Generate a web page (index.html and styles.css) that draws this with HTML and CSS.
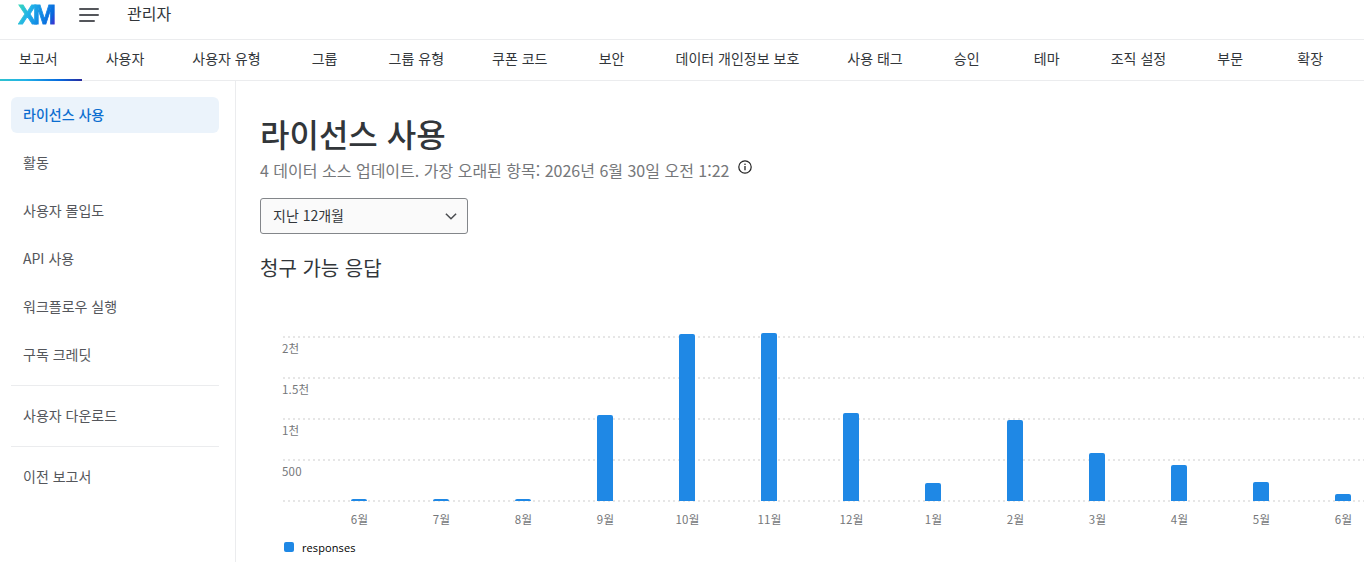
FILE: index.html
```
<!DOCTYPE html>
<html lang="ko">
<head>
  <meta charset="UTF-8">
  <title>라이선스 사용</title>
  <link rel="stylesheet" href="styles.css">
</head>
<body>
  <header class="header">
    <a class="logo">XM</a>
    <svg class="burger" width="20" height="14" viewBox="0 0 20 14" fill="none" stroke="#54565b" stroke-width="2" stroke-linecap="round">
      <path d="M1 1h18M1 7h18M1 13h14"/>
    </svg>
    <span class="header-title">관리자</span>
  </header>

  <nav class="tabs">
    <a class="tab active">보고서</a>
    <a class="tab">사용자</a>
    <a class="tab">사용자 유형</a>
    <a class="tab">그룹</a>
    <a class="tab">그룹 유형</a>
    <a class="tab">쿠폰 코드</a>
    <a class="tab">보안</a>
    <a class="tab">데이터 개인정보 보호</a>
    <a class="tab">사용 태그</a>
    <a class="tab">승인</a>
    <a class="tab">테마</a>
    <a class="tab">조직 설정</a>
    <a class="tab">부문</a>
    <a class="tab">확장</a>
  </nav>

  <div class="layout">
    <aside class="sidebar">
      <a class="side-link active">라이선스 사용</a>
      <a class="side-link">활동</a>
      <a class="side-link">사용자 몰입도</a>
      <a class="side-link">API 사용</a>
      <a class="side-link">워크플로우 실행</a>
      <a class="side-link">구독 크레딧</a>
      <hr>
      <a class="side-link">사용자 다운로드</a>
      <hr>
      <a class="side-link">이전 보고서</a>
    </aside>

    <main class="content">
      <h1>라이선스 사용</h1>
      <div class="updated">
        <span class="updated-text">4 데이터 소스 업데이트. 가장 오래된 항목: 2026년 6월 30일 오전 1:22</span>
        <svg class="info" width="14" height="14" viewBox="0 0 14 14" fill="none" stroke="#222" stroke-width="1.2">
          <circle cx="7" cy="7" r="6.2"/>
          <path d="M7 6v4.2" stroke-width="1.3"/>
          <circle cx="7" cy="4.2" r=".8" fill="#222" stroke="none"/>
        </svg>
      </div>

      <div class="select">
        <span>지난 12개월</span>
        <svg width="12" height="8" viewBox="0 0 12 8" fill="none" stroke="#4a4c50" stroke-width="1.5">
          <path d="M.9 1.7L6 6.8l5.1-5.1"/>
        </svg>
      </div>

      <h2>청구 가능 응답</h2>

      <svg class="chart" width="1104" height="221" viewBox="260 320 1104 221">
        <g class="grid">
          <path d="M283 337H1364M283 378H1364M283 419H1364M283 460H1364M283 501H1364"/>
        </g>
        <g class="y-labels">
          <text x="282" y="353">2천</text>
          <text x="282" y="394">1.5천</text>
          <text x="282" y="435">1천</text>
          <text x="282" y="476">500</text>
        </g>
        <g class="bars" id="bars"></g>
        <g class="x-labels" id="xLabels"></g>
      </svg>

      <div class="legend"><i></i><span>responses</span></div>
    </main>
  </div>

  <script src="chart.js"></script>
</body>
</html>
```
FILE: styles.css
```
* {
  box-sizing: border-box;
}

body {
  margin: 0;
  height: 562px;
  overflow: hidden;
  display: flex;
  flex-direction: column;
  background: #fff;
  color: #32363a;
  font-family: "Noto Sans CJK KR", sans-serif;
  font-size: 14px;
}

/* Header */
.header {
  display: flex;
  align-items: center;
  height: 40px;
  padding: 0 0 10px 18px;
  border-bottom: 1px solid #ebecee;
}

.logo {
  width: 61px;
  font: bold 28px/30px "Liberation Sans", sans-serif;
  letter-spacing: -4px;
  -webkit-text-stroke: .8px transparent;
  background: linear-gradient(115deg, #3ce0b0 0, #21b2e8 15px, #1187e5 28px, #0768dd 37px, #5b14c8 46px);
  -webkit-background-clip: text;
  background-clip: text;
  color: transparent;
}

.header-title {
  margin: 0 0 4px 28px;
  font-size: 16px;
  line-height: 24px;
}

/* Tabs */
.tabs {
  display: flex;
  flex-shrink: 0;
  height: 41px;
  margin-left: -5px;
  border-bottom: 1px solid #ebecee;
}

.tab {
  position: relative;
  flex: none;
  min-width: 80px;
  padding: 0 24px;
  line-height: 37px;
  text-align: center;
  white-space: nowrap;
}

.tab.active::after {
  content: "";
  position: absolute;
  left: 0;
  right: 0;
  bottom: -1px;
  height: 2px;
  background: linear-gradient(90deg, #32c5c9, #21b2e8 35%, #0768dd 75%, #2a2a9c);
}

.layout {
  display: flex;
  flex: 1;
}

/* Sidebar */
.sidebar {
  display: flex;
  flex-direction: column;
  gap: 12px;
  flex: none;
  width: 236px;
  padding: 16px 16px 0 11px;
  border-right: 1px solid #ebecee;
}

.side-link {
  height: 36px;
  padding-left: 12px;
  line-height: 34px;
  color: #54565b;
  border-radius: 6px;
}

.side-link.active {
  background: #ebf3fb;
  color: #0b6ed0;
  font-weight: 500;
}

.sidebar hr {
  width: 100%;
  height: 1px;
  margin: 0;
  border: 0;
  background: #ebecee;
}

/* Content */
.content {
  flex: 1;
  padding-left: 24px;
}

h1 {
  margin: 27px 0 0;
  font-size: 32px;
  font-weight: 500;
  line-height: 50px;
}

.updated {
  display: flex;
  height: 40px;
  color: #75777a;
  font-size: 16px;
  line-height: 24px;
}

.info {
  margin: 2px 0 0 9px;
}

.select {
  display: flex;
  align-items: center;
  justify-content: space-between;
  width: 208px;
  height: 36px;
  padding: 0 10px 0 12px;
  border: 1px solid #83868a;
  border-radius: 3px;
  background: #fafafa;
}

.select span {
  margin-bottom: 2px;
}

h2 {
  margin: 19px 0 0;
  font-size: 20px;
  font-weight: 400;
  line-height: 30px;
}

/* Chart */
.chart {
  display: block;
  margin-top: 37px;
}

.grid {
  stroke: #e6e6e6;
  stroke-width: 2;
  stroke-dasharray: 2 3;
}

.bars {
  fill: #1f88e5;
}

.y-labels,
.x-labels {
  fill: #75777a;
  font-size: 11.5px;
  letter-spacing: .2px;
}

.x-labels {
  text-anchor: middle;
}

.legend {
  display: flex;
  align-items: center;
  gap: 8px;
  height: 12px;
  padding-left: 24px;
  color: #000;
  font: 11px/14px "Open Sans", sans-serif;
  letter-spacing: .1px;
}

.legend i {
  width: 10px;
  height: 10px;
  border-radius: 2px;
  background: #1f88e5;
}

.legend span {
  margin-top: 2px;
}
```
FILE: chart.js
```
const data = [
  ['6월', 2], ['7월', 2], ['8월', 2], ['9월', 86], ['10월', 167],
  ['11월', 168], ['12월', 88], ['1월', 18], ['2월', 81], ['3월', 48],
  ['4월', 36], ['5월', 19], ['6월', 7]
];

const bars = document.getElementById('bars');
const xLabels = document.getElementById('xLabels');

let barsHtml = '';
let labelsHtml = '';
data.forEach(([label, h], i) => {
  const x = 351 + i * 82;
  // Rounded top corners only
  barsHtml += `<path d="M${x} 501v${2 - h}q0 -2 2 -2h12q2 0 2 2v${h - 2}z"/>`;
  labelsHtml += `<text x="${x + 8.5}" y="524">${label}</text>`;
});
bars.innerHTML = barsHtml;
xLabels.innerHTML = labelsHtml;
```
